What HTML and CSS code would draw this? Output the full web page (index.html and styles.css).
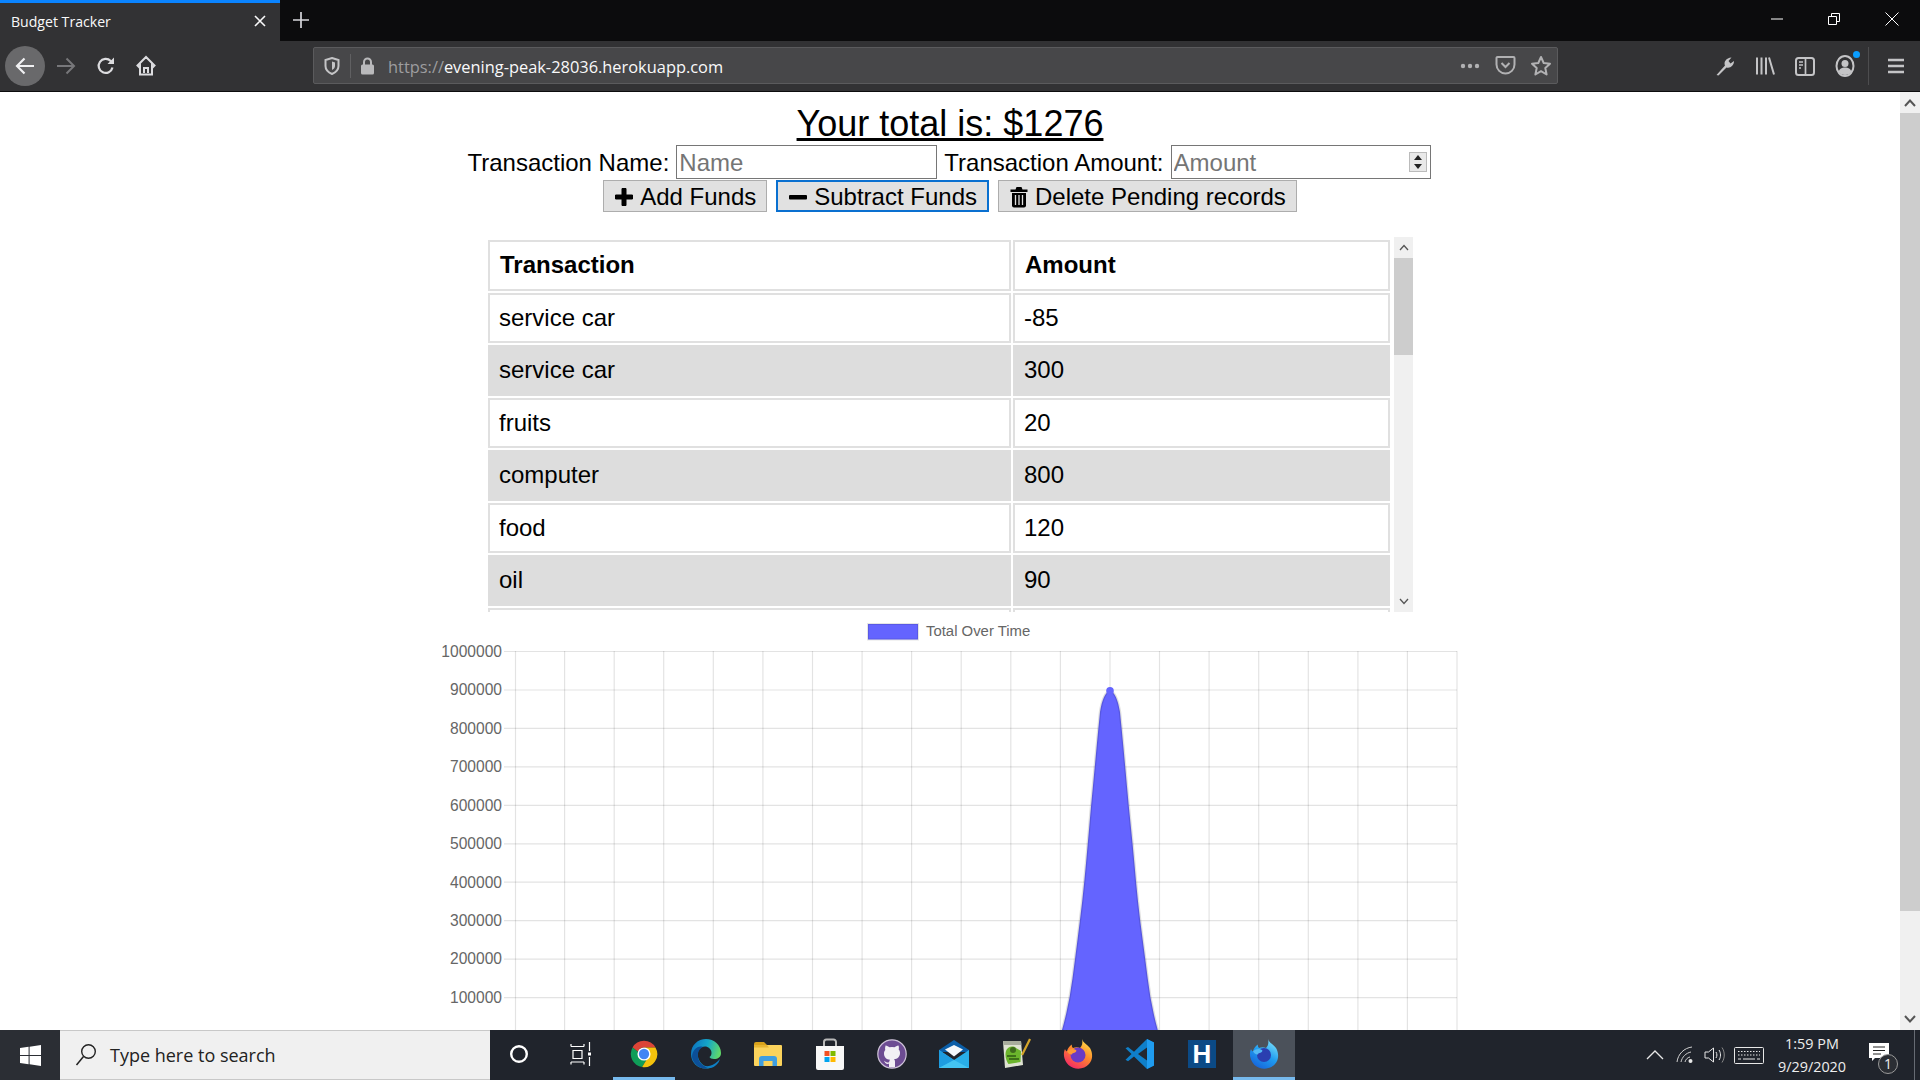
FILE: index.html
```html
<!DOCTYPE html>
<html lang="en">
<head>
<meta charset="utf-8">
<title>Budget Tracker</title>
<link rel="stylesheet" href="styles.css">
</head>
<body>
<div class="tabstrip">
  <div class="tab">
    <span class="tab-title">Budget Tracker</span>
    <svg class="tab-close" width="14" height="14" viewBox="0 0 14 14"><path d="M2 2l10 10M12 2L2 12" stroke="#f9f9fa" stroke-width="1.6" fill="none"/></svg>
  </div>
  <svg class="newtab" width="18" height="18" viewBox="0 0 18 18"><path d="M9 1v16M1 9h16" stroke="#d7d7db" stroke-width="1.7" fill="none"/></svg>
  <div class="winbtns">
    <svg width="14" height="14" viewBox="0 0 14 14"><path d="M1 7h12" stroke="#fff" stroke-width="1" fill="none"/></svg>
    <svg width="14" height="14" viewBox="0 0 14 14"><path d="M1.5 4.5h8v8h-8zM4.5 4.5v-3h8v8h-3" stroke="#fff" stroke-width="1" fill="none"/></svg>
    <svg width="16" height="16" viewBox="0 0 16 16"><path d="M1.5 1.5l13 13M14.5 1.5l-13 13" stroke="#fff" stroke-width="1" fill="none"/></svg>
  </div>
</div>

<div class="toolbar">
  <div class="navbtns">
    <div class="navbtn navbtn-back"><svg width="22" height="22" viewBox="0 0 22 22"><path d="M20 11H3M10.500 3.500L3 11l7.500 7.500" stroke="#f0f0f2" stroke-width="2.200" fill="none"/></svg></div>
    <div class="navbtn"><svg width="22" height="22" viewBox="0 0 22 22"><path d="M2 11h17M11.500 3.500L19 11l-7.500 7.500" stroke="#77777a" stroke-width="2" fill="none"/></svg></div>
    <div class="navbtn"><svg width="22" height="22" viewBox="0 0 22 22"><path d="M17.500 12.500a7 7 0 1 1-1.800-6.500L18 8" stroke="#dcdcdf" stroke-width="2.200" fill="none"/><path d="M19 2.500V9h-6.500z" fill="#dcdcdf"/></svg></div>
    <div class="navbtn"><svg width="22" height="22" viewBox="0 0 22 22"><path d="M11 2L2.500 10.500 4 12l1-1v8.500h12V11l1 1 1.500-1.500zM9 18v-5h4v5" stroke="#dcdcdf" stroke-width="2" fill="none"/></svg></div>
  </div>
  <div class="urlbar">
    <svg class="url-shield" width="16" height="18" viewBox="0 0 16 18"><path d="M8 1l6.500 2v6c0 4-3 6.500-6.500 8-3.500-1.500-6.500-4-6.500-8V3z" stroke="#c4c4c6" stroke-width="2" fill="none"/><path d="M8 4.500l3 1v3.500c0 2-1.500 3.200-3 4z" fill="#c4c4c6"/></svg>
    <span class="url-sep"></span>
    <svg class="url-lock" width="15" height="18" viewBox="0 0 15 18"><path d="M4 8V5a3.500 3.500 0 0 1 7 0v3" stroke="#b9b9bb" stroke-width="2" fill="none"/><rect x="1" y="7.500" width="13" height="10" rx="1.500" fill="#b9b9bb"/></svg>
    <span class="url-text"><span class="url-scheme">https://</span>evening-peak-28036.herokuapp.com</span>
    <div class="url-actions">
      <svg width="22" height="6" viewBox="0 0 22 6"><circle cx="4" cy="3" r="2.200" fill="#b1b1b3"/><circle cx="11" cy="3" r="2.200" fill="#b1b1b3"/><circle cx="18" cy="3" r="2.200" fill="#b1b1b3"/></svg>
      <svg width="21" height="21" viewBox="0 0 21 21"><path d="M2.500 2h16a1 1 0 0 1 1 1v6.500c0 5-4 9-9 9s-9-4-9-9V3a1 1 0 0 1 1-1z" stroke="#b1b1b3" stroke-width="2" fill="none"/><path d="M6.500 8l4 4 4-4" stroke="#b1b1b3" stroke-width="2" fill="none"/></svg>
      <svg width="22" height="22" viewBox="0 0 22 22"><path d="M11 2l2.700 6 6.300.7-4.700 4.300 1.300 6.500-5.600-3.300-5.600 3.300 1.300-6.500L2 8.700 8.300 8z" stroke="#b1b1b3" stroke-width="2" fill="none" stroke-linejoin="round"/></svg>
    </div>
  </div>
  <div class="tools">
    <div class="tool"><svg width="22" height="22" viewBox="0 0 22 22"><path d="M2.500 20l8.500-9.500c-1.500-3.500 1-7.500 6.500-8l-3 3.500 2 2.500 3.500-2.500c0 4.500-3.500 7.500-7.500 6.500l-8 8z" fill="#c4c4c6"/></svg></div>
    <div class="tool"><svg width="22" height="22" viewBox="0 0 22 22"><path d="M3 2.500v17M7.500 2.500v17M12 2.500v17M15 2.500l5 17" stroke="#c4c4c6" stroke-width="2" fill="none"/></svg></div>
    <div class="tool"><svg width="22" height="22" viewBox="0 0 22 22"><rect x="2" y="3" width="18" height="17" rx="2.500" stroke="#c4c4c6" stroke-width="2" fill="none"/><path d="M11.500 3v17M5 7h4M5 10h4M5 13h2" stroke="#c4c4c6" stroke-width="1.700" fill="none"/></svg></div>
    <div class="tool tool-account"><svg width="22" height="24" viewBox="0 0 22 24"><ellipse cx="11" cy="12" rx="8.500" ry="10" stroke="#c4c4c6" stroke-width="2" fill="none"/><circle cx="11" cy="9.500" r="3.500" fill="#c4c4c6"/><path d="M4.500 18c1-3.500 3.500-4.500 6.500-4.500s5.500 1 6.500 4.500c-1.500 2-4 3-6.500 3s-5-1-6.500-3z" fill="#c4c4c6"/></svg><span class="notify-dot"></span></div>
    <span class="tool-sep"></span>
    <div class="tool tool-menu"><svg width="18" height="18" viewBox="0 0 18 18"><path d="M1 3h16M1 9h16M1 15h16" stroke="#c4c4c6" stroke-width="2.400" fill="none"/></svg></div>
  </div>
</div>

<div class="viewport">
  <main class="page">
    <h1 class="total">Your total is: $1276</h1>
    <form class="entry">
      <label class="entry-label" for="n">Transaction Name:</label>
      <input class="entry-input" id="n" type="text" placeholder="Name">
      <label class="entry-label" for="a">Transaction Amount:</label>
      <span class="amount-wrap">
        <input class="entry-input entry-input-amount" id="a" type="text" placeholder="Amount">
        <span class="spinner"><i class="spin-up"></i><i class="spin-down"></i></span>
      </span>
    </form>
    <div class="actions">
      <button class="btn" type="button"><svg width="20" height="20" viewBox="0 0 20 20"><path d="M8 1.500h4V8h6.500v4H12v6.500H8V12H1.500V8H8z" fill="#000" stroke="#000" stroke-linejoin="round"/></svg>Add Funds</button>
      <button class="btn btn-focus" type="button"><svg width="20" height="20" viewBox="0 0 20 20"><rect x="1" y="8" width="18" height="4.500" rx="1" fill="#000"/></svg>Subtract Funds</button>
      <button class="btn" type="button"><svg width="20" height="22" viewBox="0 0 20 22"><path d="M1.500 3.500h5l1-2.500h5l1 2.500h5v2.500h-17z" fill="#000"/><path d="M3 7h14v12.500a2 2 0 0 1-2 2H5a2 2 0 0 1-2-2z" fill="#000"/><path d="M6.500 9v10M10 9v10M13.500 9v10" stroke="#e0e0e0" stroke-width="1.300"/></svg>Delete Pending records</button>
    </div>
    <section class="ledger">
      <div class="ledger-clip">
        <table class="ledger-table">
          <colgroup><col class="col-name"><col class="col-amount"></colgroup>
          <thead><tr><th>Transaction</th><th>Amount</th></tr></thead>
          <tbody>
            <tr><td>service car</td><td>-85</td></tr>
            <tr><td>service car</td><td>300</td></tr>
            <tr><td>fruits</td><td>20</td></tr>
            <tr><td>computer</td><td>800</td></tr>
            <tr><td>food</td><td>120</td></tr>
            <tr><td>oil</td><td>90</td></tr>
            <tr><td>&nbsp;</td><td>&nbsp;</td></tr>
          </tbody>
        </table>
      </div>
      <div class="ledger-scroll">
        <svg class="chev" width="10" height="7" viewBox="0 0 10 7"><path d="M1 6l4-4.500L9 6" stroke="#555" stroke-width="1.300" fill="none"/></svg>
        <div class="ledger-thumb"></div>
        <svg class="chev chev-end" width="10" height="7" viewBox="0 0 10 7"><path d="M1 1l4 4.500L9 1" stroke="#555" stroke-width="1.300" fill="none"/></svg>
      </div>
    </section>
    <svg class="chart" width="1040" height="418" viewBox="430 612 1040 418">
      <g class="grid">
        <path d="M515.500 651V1030M564.600 651V1030M614.200 651V1030M663.700 651V1030M713.300 651V1030M762.900 651V1030M812.500 651V1030M862.100 651V1030M911.600 651V1030M961.200 651V1030M1010.800 651V1030M1060.400 651V1030M1110 651V1030M1159.500 651V1030M1209.100 651V1030M1258.700 651V1030M1308.300 651V1030M1357.900 651V1030M1407.400 651V1030M1457 651V1030"/>
        <path d="M504 651.500H1457M504 690H1457M504 728.400H1457M504 766.900H1457M504 805.300H1457M504 843.800H1457M504 882.200H1457M504 920.700H1457M504 959.100H1457M504 997.600H1457"/>
      </g>
      <path class="area" d="M1059 1040Q1062.300 1030 1066.200 1013.600Q1070 997.300 1072.500 978.300Q1075 959.300 1077.500 939.800Q1080 920.300 1082.200 901.300Q1084.300 882.300 1086 863.300Q1087.700 844.300 1089.400 825Q1091 805.700 1092.900 786.500Q1094.700 767.300 1096.500 748Q1098.300 728.700 1100 712C1102 700 1105 692 1110 690.700C1115 692 1118 700 1120 712Q1121.700 728.700 1123.500 748Q1125.300 767.300 1127 786.500Q1128.700 805.700 1130.700 825Q1132.700 844.300 1134.400 863.300Q1136 882.300 1138 901.300Q1140 920.300 1142.700 939.800Q1145.300 959.300 1147.700 978.300Q1150 997.300 1153.700 1013.600Q1157.300 1030 1161 1040Z"/>
      <circle class="peak" cx="1110" cy="690.700" r="3.800"/>
      <rect class="legend-box" x="868" y="624" width="50" height="15.500"/>
      <text class="legend-text" x="926" y="636">Total Over Time</text>
      <g class="ticks">
        <text x="502" y="656.800">1000000</text>
        <text x="502" y="695.300">900000</text>
        <text x="502" y="733.700">800000</text>
        <text x="502" y="772.200">700000</text>
        <text x="502" y="810.600">600000</text>
        <text x="502" y="849.100">500000</text>
        <text x="502" y="887.500">400000</text>
        <text x="502" y="926">300000</text>
        <text x="502" y="964.400">200000</text>
        <text x="502" y="1002.900">100000</text>
      </g>
    </svg>
  </main>
  <div class="page-scroll">
    <svg class="page-chev" width="12" height="8" viewBox="0 0 12 8"><path d="M1 7l5-5.500L11 7" stroke="#555" stroke-width="2" fill="none"/></svg>
    <div class="page-thumb"></div>
    <svg class="page-chev page-chev-end" width="12" height="8" viewBox="0 0 12 8"><path d="M1 1l5 5.500L11 1" stroke="#555" stroke-width="2" fill="none"/></svg>
  </div>
</div>

<footer class="taskbar">
  <div class="start"><svg width="21" height="21" viewBox="0 0 21 21"><path d="M0 3l8.600-1.200v8.100H0zM9.600 1.700L21 0v9.900H9.600zM0 11h8.600v8.200L0 18zM9.600 11H21v10l-11.400-1.700z" fill="#fff"/></svg></div>
  <div class="search">
    <svg width="22" height="26" viewBox="0 0 22 26"><circle cx="13.500" cy="9.500" r="6.800" stroke="#222" stroke-width="1.400" fill="none"/><path d="M8.500 14.500L1.500 23" stroke="#222" stroke-width="1.500" fill="none"/></svg>
    <span class="search-text">Type here to search</span>
  </div>
  <div class="slot slot-narrow"><svg width="24" height="24" viewBox="0 0 24 24"><circle cx="12" cy="12" r="7.800" stroke="#fff" stroke-width="2.400" fill="none"/></svg></div>
  <div class="slot slot-narrow"><svg width="22" height="26" viewBox="0 0 22 26"><path d="M1 5.500h13M1 3v2.500M14 3v2.500M3 9.500h9v8H3zM1 21h13M1 21v2.500M14 21v2.500M19.500 1v9M19.500 16v9" stroke="#fff" stroke-width="1.200" fill="none"/><rect x="18" y="11.500" width="3" height="3" fill="#fff"/></svg></div>
  <div class="slot slot-active-line">
    <svg width="30" height="30" viewBox="0 0 32 32"><path d="M3.800 9A14 14 0 0 1 28.200 9H16a7 7 0 0 0-6.500 4.500z" fill="#db4437"/><path d="M3.800 9A14 14 0 0 0 14 29.900l6-10a7 7 0 0 1-10.500-6.400z" fill="#0f9d58"/><path d="M28.200 9A14 14 0 0 1 14 29.900l6-10A7 7 0 0 0 16 9z" fill="#f4c20d"/><circle cx="16" cy="16" r="7" fill="#fff"/><circle cx="16" cy="16" r="5.500" fill="#4285f4"/></svg>
  </div>
  <div class="slot">
    <svg width="32" height="32" viewBox="0 0 32 32"><defs><linearGradient id="eg" x1="0" y1="0" x2="1" y2="0.300"><stop offset="0" stop-color="#0b6cc0"/><stop offset=".55" stop-color="#14a6c8"/><stop offset="1" stop-color="#5fd86a"/></linearGradient></defs><path d="M1 16C1 7 8 1 16 1c8 0 15 6 15 14 0 4-3 6-7 6-2.500 0-4-1-4.500-2 1.500-1 2-2.500 2-4 0-4-3.500-6.500-6.500-6.500C9 8.500 7 14 8 19c1 5 5 9.500 12 11-10 2.500-19-4-19-14z" fill="url(#eg)"/><path d="M2 19c0-7 6-12 11-10-4 1.500-5.500 6-5 10 .6 5 4.500 9.500 12 11-8 3-17-3-18-11z" fill="#0c4f98"/><path d="M30 21c-1.500 5-5.500 8-9 9-3 .4-5-.4-7-2.500 1.500.8 4 .8 6 .3 4-1 7-3.800 10-6.800z" fill="#0e7fc4"/></svg>
  </div>
  <div class="slot">
    <svg width="30" height="26" viewBox="0 0 30 26"><path d="M1 3a2 2 0 0 1 2-2h8l3 3h-13z" fill="#d9a21b"/><rect x="1" y="4" width="28" height="21" rx="1" fill="#fbd35c"/><path d="M1 4h13l2 2.500H1z" fill="#e8b531"/><path d="M6 25v-7a3 3 0 0 1 3-3h12a3 3 0 0 1 3 3v7h-4.500v-5h-9v5z" fill="#3f9ee0"/></svg>
  </div>
  <div class="slot">
    <svg width="30" height="32" viewBox="0 0 30 32"><path d="M9 9V4a2.500 2.500 0 0 1 2.500-2.500h7A2.500 2.500 0 0 1 21 4v5" stroke="#b9b9b9" stroke-width="2" fill="none"/><path d="M1 8h28v22a2 2 0 0 1-2 2H3a2 2 0 0 1-2-2z" fill="#f8f8f8"/><rect x="9.500" y="13" width="5" height="5" fill="#f25022"/><rect x="15.500" y="13" width="5" height="5" fill="#7fba00"/><rect x="9.500" y="19" width="5" height="5" fill="#00a4ef"/><rect x="15.500" y="19" width="5" height="5" fill="#ffb900"/></svg>
  </div>
  <div class="slot">
    <svg width="30" height="30" viewBox="0 0 30 30"><circle cx="15" cy="15" r="14.200" fill="#6d4c93" stroke="#cfc4d9" stroke-width="1.200"/><path d="M8.500 6.500c1.500.2 3 1 4 1.800a10 10 0 0 1 5 0c1-.8 2.500-1.600 4-1.800.5 1.500.5 3 .2 4 1 1 1.300 2.200 1.300 3.500 0 4-2.500 5.800-6 6.300.7.500 1 1.500 1 2.500v5.200a14 14 0 0 1-6 0v-3.200c-3 .5-4-.8-5-3 1 .5 2 1.500 3.200 1.800.6 0 1.300 0 1.900-.3 0-.8.400-1.600.9-2.500-3.500-.5-6-2.300-6-6.300 0-1.300.3-2.500 1.300-3.500-.3-1-.3-2.500.2-4z" fill="#f2f0f5"/></svg>
  </div>
  <div class="slot">
    <svg width="30" height="30" viewBox="0 0 30 30"><path d="M0 11L15 1l15 10v2H0z" fill="#0b5ea8"/><path d="M6 10.500L15 6l9 4.500-9 7z" fill="#f4f8fb"/><path d="M0 11l15 10 15-10v18H0z" fill="#29aee8"/><path d="M0 11l15 10L0 29z" fill="#1e9ce0"/><path d="M0 29l15-8 15 8z" fill="#44c4f2"/></svg>
  </div>
  <div class="slot">
    <svg width="30" height="32" viewBox="0 0 30 32"><path d="M2 3h18l2 24-18 3z" fill="#dfe3d2"/><path d="M2 3h18l.4 4H2.300z" fill="#a9ad9d"/><path d="M5 13c1-4 7-6 10-3l5 3-.5 11-12 2c-2-3-4-8-2.500-13z" fill="#6bb52c"/><circle cx="12" cy="12" r="3" fill="#3e6a1c"/><path d="M6 18h9M8 21h10" stroke="#2f5a12" stroke-width="1.500"/><path d="M29 1L21 17" stroke="#d5a62a" stroke-width="2.200"/></svg>
  </div>
  <div class="slot">
    <svg width="30" height="32" viewBox="0 0 30 32"><defs><linearGradient id="fg" x1="0.800" y1="0" x2="0.200" y2="1"><stop offset="0" stop-color="#ffe24a"/><stop offset=".45" stop-color="#ff8a2b"/><stop offset="1" stop-color="#f5206b"/></linearGradient></defs><path d="M19 1c1 4 5 5 8 9 3 5 3 12-1 16-5 6-15 6-20.500 1C.500 22 0 15 2 11c.6 1.500 1.300 2 2 2.500.5-3 2.500-5.500 5-7-.5 1.500 0 2.500 1 3.500 2-1 5-1 7 0 2-2 3-5 2-9z" fill="url(#fg)"/><circle cx="15" cy="17" r="7.500" fill="#6b3bc4"/><path d="M4 13c3-2 6-3 9-1 1 .8 0 2-1 2.500-2 .6-3 .8-3 2-3 0-4-1.500-5-3.500z" fill="#ff9b36"/></svg>
  </div>
  <div class="slot">
    <svg width="30" height="32" viewBox="0 0 30 32"><path d="M22 1l7 3.500v23L22 31 9 18.500l-6 4.700-2.500-1.500 6-5.700-6-5.700L3 9l6 4.700z" fill="#0f7fc9"/><path d="M22 1l7 3.500v23L22 31V1z" fill="#1f9cf0"/><path d="M22 9.500L13 16l9 6.500z" fill="#24272e"/></svg>
  </div>
  <div class="slot">
    <svg class="h-mark" width="28" height="28" viewBox="0 0 28 28"><rect width="28" height="28" fill="#0b4a86"/><text class="h-logo" x="14" y="23.300">H</text></svg>
  </div>
  <div class="slot slot-active">
    <svg width="30" height="32" viewBox="0 0 30 32"><defs><linearGradient id="dg" x1="0.800" y1="0" x2="0.200" y2="1"><stop offset="0" stop-color="#7fe3fb"/><stop offset=".5" stop-color="#1f9cf0"/><stop offset="1" stop-color="#1660d8"/></linearGradient></defs><path d="M19 1c1 4 5 5 8 9 3 5 3 12-1 16-5 6-15 6-20.500 1C.500 22 0 15 2 11c.6 1.500 1.300 2 2 2.500.5-3 2.500-5.500 5-7-.5 1.500 0 2.500 1 3.500 2-1 5-1 7 0 2-2 3-5 2-9z" fill="url(#dg)"/><circle cx="15" cy="17" r="7" fill="#2a3fb0"/><path d="M4 13c3-2 6-3 9-1 1 .8 0 2-1 2.500-2 .6-3 .8-3 2-3 0-4-1.500-5-3.500z" fill="#52b9f5"/></svg>
  </div>
  <div class="tray">
    <svg class="tray-chevron" width="18" height="12" viewBox="0 0 18 12"><path d="M1 10l8-8 8 8" stroke="#e8e8e8" stroke-width="1.300" fill="none"/></svg>
    <svg class="tray-wifi" width="18" height="18" viewBox="0 0 18 18"><path d="M1 16C2 8 8 2 16 1M5 16c1-5 5-9 10-10M9 16c.5-2.500 2.500-4.500 5-5" stroke="#d0d0d0" stroke-width="1" fill="none"/><circle cx="14.500" cy="15" r="2" fill="#e8e8e8"/></svg>
    <svg class="tray-vol" width="22" height="18" viewBox="0 0 22 18"><path d="M1 6h3.500L9.500 2v14l-5-4H1z" stroke="#e8e8e8" stroke-width="1" fill="none"/><path d="M12 6c1.200 2 1.200 4 0 6M15 4c2 3 2 7 0 10" stroke="#e8e8e8" stroke-width="1" fill="none"/><path d="M18 1.500c3 4.500 3 10.500 0 15" stroke="#8a8a8a" stroke-width="1" fill="none"/></svg>
    <svg class="tray-kbd" width="30" height="17" viewBox="0 0 30 17"><rect x=".5" y=".5" width="29" height="16" rx="1" stroke="#e8e8e8" fill="none"/><path d="M4 4.500h22M4 8h22" stroke="#e8e8e8" stroke-dasharray="1.500 1.500"/><path d="M4 12h3M9 12h12M23 12h3" stroke="#e8e8e8"/></svg>
    <div class="clock"><span>1:59 PM</span><span>9/29/2020</span></div>
    <div class="notif">
      <svg width="20" height="18" viewBox="0 0 20 18"><path d="M0 0h20v15H6l-3 3v-3H0z" fill="#fff"/><path d="M4 4h12M4 7.500h12M4 11h8" stroke="#222" stroke-width="1"/></svg>
      <span class="notif-badge">1</span>
    </div>
    <span class="show-desktop"></span>
  </div>
</footer>
</body>
</html>
```
FILE: styles.css
```css
* { box-sizing: border-box; }
html, body { margin: 0; padding: 0; height: 100%; }
body {
  width: 1920px;
  height: 1080px;
  overflow: hidden;
  display: flex;
  flex-direction: column;
  font-family: "Liberation Sans", Arial, sans-serif;
  background: #fff;
}

/* browser frame */
.tabstrip { height: 41px; flex: none; display: flex; align-items: center; background: #0c0c0d; }
.tab {
  width: 280px; height: 41px; display: flex; align-items: center; justify-content: space-between;
  padding: 0 13px 2px 11px; background: #323234; border-top: 3px solid #0a84ff;
}
.tab-title { font: 14.1px "Open Sans", sans-serif; color: #f9f9fa; }
.newtab { margin: 0 0 2px 12px; }
.winbtns { margin-left: auto; display: flex; align-items: center; gap: 43px; padding: 0 20px 3px 0; }

.toolbar { height: 51px; flex: none; display: flex; align-items: center; padding: 0 0 1px 5px; background: #323234; border-bottom: 1px solid #0c0c0d; }
.navbtns { display: flex; width: 308px; flex: none; }
.navbtn { width: 40px; height: 40px; display: flex; align-items: center; justify-content: center; border-radius: 50%; }
.navbtn-back { background: #69696b; margin-right: 1px; }
.urlbar {
  width: 1245px; height: 37px; flex: none; display: flex; align-items: center; padding-left: 10px;
  background: #474749; border: 1px solid #5b5b5d; border-radius: 2px;
}
.url-sep { width: 1px; height: 24px; background: #606062; margin: 0 9px 0 10px; }
.url-text { margin: 2px 0 0 13px; font: 16.4px "Open Sans", sans-serif; color: #f9f9fa; }
.url-scheme { color: #9d9d9f; }
.url-actions { margin-left: auto; display: flex; align-items: center; gap: 14px; padding-right: 5px; }
.tools { display: flex; align-items: center; margin-left: 147px; }
.tool { width: 40px; height: 40px; display: flex; align-items: center; justify-content: center; position: relative; }
.notify-dot { position: absolute; top: 5px; right: 5px; width: 7px; height: 7px; border-radius: 50%; background: #0a9dff; }
.tool-sep { width: 1px; height: 38px; background: #4d4d4f; margin-left: 3px; }
.tool-menu { width: 54px; }

/* page */
.viewport { flex: 1; min-height: 0; display: flex; }
.page { flex: 1; min-width: 0; overflow: hidden; display: flex; flex-direction: column; align-items: center; padding-top: 11px; font-size: 24px; color: #000; }
.total { margin: 0 0 1px; font-size: 36px; line-height: 41px; font-weight: 400; text-decoration: underline; }
.entry { display: flex; align-items: center; gap: 7px; height: 34px; margin-right: 2px; }
.entry-label { white-space: nowrap; padding-top: 2px; }
.entry-input {
  width: 261px; height: 34px; padding: 2px 2px 0; font: 24px "Liberation Sans", Arial, sans-serif;
  color: #000; background: #fff; border: 1.5px solid #767676; border-radius: 0; outline: none;
}
.entry-input-amount { width: 260px; }
.entry-input::placeholder { color: #757575; opacity: 1; }
.amount-wrap { position: relative; display: block; }
.spinner { position: absolute; top: 7px; right: 4px; width: 18px; height: 20px; display: flex; flex-direction: column; background: #e9e9e9; border: 1px solid #bbb; }
.spinner i { flex: 1; display: block; position: relative; }
.spin-up::after { content: ""; position: absolute; left: 4px; top: 2px; border: 4px solid transparent; border-top: 0; border-bottom: 5px solid #222; }
.spin-down::after { content: ""; position: absolute; left: 4px; top: 2px; border: 4px solid transparent; border-bottom: 0; border-top: 5px solid #222; }
.actions { display: flex; gap: 9px; margin-top: 1px; height: 32px; }
.btn {
  height: 32px; display: flex; align-items: center; gap: 6px; padding: 1px 10px 0;
  font: 24px "Liberation Sans", Arial, sans-serif; color: #000; background: #e1e1e1; border: 1.5px solid #adadad; border-radius: 0;
}
.btn-focus { border: 2px solid #0a70d0; }

.ledger { width: 927px; height: 375px; flex: none; margin: 25px 1px 0 0; display: flex; gap: 2px; }
.ledger-clip { width: 906px; height: 375px; overflow: hidden; padding-top: 1px; }
.ledger-table { width: 906px; table-layout: fixed; border-collapse: separate; border-spacing: 2px; }
.col-name { width: 523px; }
.col-amount { width: 377px; }
.ledger-table th, .ledger-table td { height: 50.5px; padding: 0 9px; text-align: left; border: 2px solid #e0e0e0; }
.ledger-table th { font-weight: 700; padding-left: 10px; }
.ledger-table tbody tr:nth-child(even) td { background: #ddd; border-color: #ddd; }
.ledger-scroll { width: 19px; height: 375px; display: flex; flex-direction: column; align-items: center; background: #f0f0f0; }
.chev { flex: none; margin-top: 7px; }
.chev-end { margin: auto 0 7px; }
.ledger-thumb { width: 100%; height: 97px; margin-top: 7px; background: #cdcdcd; }

.chart { flex: none; }
.grid path { stroke: rgba(0, 0, 0, .11); stroke-width: 1.2; fill: none; }
.area { fill: #6464ff; stroke: rgba(0, 0, 0, .12); stroke-width: 2.5; }
.peak { fill: #6464ff; }
.legend-box { fill: #6464ff; stroke: rgba(0, 0, 0, .1); stroke-width: 2; }
.ticks text { font: 15.6px "Liberation Sans", Arial, sans-serif; fill: #666; text-anchor: end; }
.legend-text { font: 14.9px "Liberation Sans", Arial, sans-serif; fill: #666; }

.page-scroll { width: 20px; flex: none; display: flex; flex-direction: column; align-items: center; background: #f0f0f0; }
.page-chev { flex: none; margin-top: 7px; }
.page-chev-end { margin: auto 0 7px; }
.page-thumb { width: 100%; height: 798px; margin-top: 6px; background: #cdcdcd; }

/* taskbar */
.taskbar { height: 50px; flex: none; display: flex; align-items: center; background: #20242c; }
.start { width: 60px; height: 50px; display: flex; align-items: center; justify-content: center; background: #2b2e34; }
.search {
  width: 430px; height: 50px; display: flex; align-items: center; gap: 13px; padding-left: 15px;
  background: #f0f0f0; border-top: 1px solid #c8c8c8; border-bottom: 1px solid #c8c8c8;
}
.search-text { font: 18px "Open Sans", sans-serif; color: #222; }
.slot { width: 62px; height: 50px; flex: none; display: flex; align-items: center; justify-content: center; border-bottom: 3px solid transparent; padding-top: 1px; }
.slot-narrow { width: 61.5px; padding-right: 3px; }
.slot-active-line { border-bottom-color: #76b9ed; }
.slot-active { background: #4b515a; border-bottom-color: #76b9ed; }
.h-mark { overflow: visible; }
.h-logo { font: 700 26px "Liberation Sans", Arial, sans-serif; fill: #fff; text-anchor: middle; }
.tray { flex: 1; height: 50px; display: flex; align-items: center; justify-content: flex-end; }
.tray-wifi { margin-left: 12px; }
.tray-vol { margin-left: 10px; }
.tray-kbd { margin-left: 8px; }
.clock { width: 96px; display: flex; flex-direction: column; align-items: center; gap: 3px; font: 14.4px/20px "Open Sans", sans-serif; color: #eee; }
.notif { position: relative; width: 30px; height: 50px; margin-left: 4px; display: flex; align-items: center; padding-left: 5px; padding-bottom: 6px; }
.notif-badge {
  position: absolute; left: 14px; top: 24px; width: 20px; height: 20px; border-radius: 50%;
  background: #2b2e34; border: 1px solid #9a9a9a; color: #eee; font: 14px/18px "Open Sans", sans-serif; text-align: center;
}
.show-desktop { width: 1px; height: 50px; margin: 0 5px 0 20px; background: #666b73; }
```
